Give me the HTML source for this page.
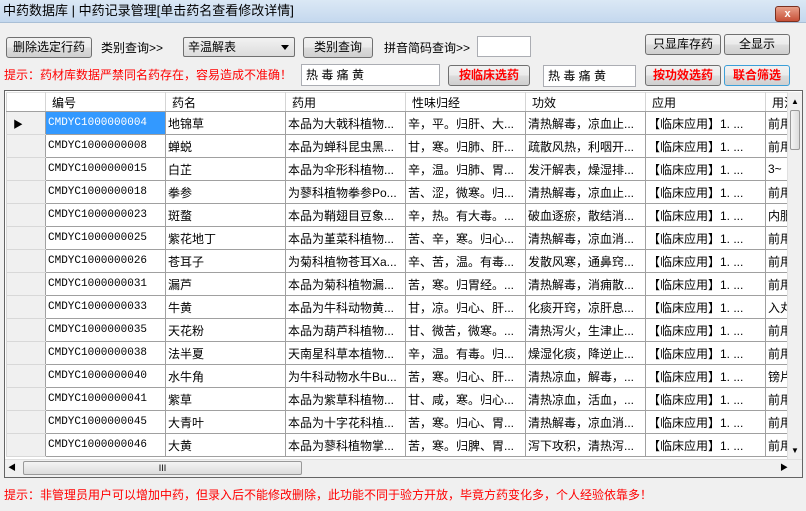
<!DOCTYPE html><html><head><meta charset="utf-8"><style>
*{box-sizing:border-box;margin:0;padding:0}
body{width:806px;height:511px;overflow:hidden;background:#f0f0f0;font-family:"Liberation Sans","Noto Sans CJK SC",sans-serif;font-size:12px;position:relative;color:#000}
.abs{position:absolute}
.title{left:0;top:0;width:806px;height:23px;background:linear-gradient(#dbe8f5,#c4d8ee);border-bottom:1px solid #a9bfd6;font-size:13px;line-height:22px;padding-left:3px}
.btn{position:absolute;height:21px;border:1px solid #707070;border-radius:3px;background:linear-gradient(#f2f2f2,#ebebeb 50%,#dddddd 51%,#cfcfcf);text-align:center;line-height:19px;font-size:12px}
.red{color:#f00;font-weight:bold}
.inp{position:absolute;background:#fff;border:1px solid #abadb3;font-size:12px;line-height:20px;padding-left:4px}
.lbl{position:absolute;font-size:12px}
table{border-collapse:collapse;table-layout:fixed;position:absolute;left:6px;top:92px}
td{border:1px solid #a0a0a0;height:23px;white-space:nowrap;overflow:hidden;font-size:12px;padding-left:2px;background:#fff}
td.rh{background:#f0f0f0;border-color:#d8d8d8 #a0a0a0 #d8d8d8 #d8d8d8}
td.id{font-family:"Liberation Mono",monospace;font-size:11px}
tr.h td{height:19px;background:#fff;font-size:12px;padding-left:6px;border-color:#e0e0e0 #d5d5d5 #a0a0a0 #d5d5d5}
</style></head><body>
<div class="abs title">中药数据库 | 中药记录管理[单击药名查看修改详情]</div>
<div class="abs" style="left:775px;top:6px;width:25px;height:16px;background:linear-gradient(#e8a08a,#c75038);border:1px solid #7a3020;border-radius:3px;color:#fff;font-size:11px;text-align:center;line-height:14px;font-weight:bold">x</div>
<div class="btn" style="left:6px;top:37px;width:86px">删除选定行药</div>
<div class="lbl" style="left:101px;top:39px">类别查询&gt;&gt;</div>
<div class="abs" style="left:183px;top:37px;width:112px;height:20px;border:1px solid #707070;border-radius:2px;background:linear-gradient(#f2f2f2,#dcdcdc);font-size:12px;line-height:18px;padding-left:4px">辛温解表<span style="position:absolute;right:5px;top:7px;border-left:4px solid transparent;border-right:4px solid transparent;border-top:5px solid #000"></span></div>
<div class="btn" style="left:303px;top:37px;width:70px">类别查询</div>
<div class="lbl" style="left:384px;top:39px">拼音简码查询&gt;&gt;</div>
<div class="inp" style="left:477px;top:36px;width:54px;height:21px"></div>
<div class="btn" style="left:645px;top:34px;width:76px">只显库存药</div>
<div class="btn" style="left:724px;top:34px;width:66px">全显示</div>
<div class="lbl" style="left:4px;top:66px;color:#f00">提示：药材库数据严禁同名药存在，容易造成不准确！</div>
<div class="inp" style="left:301px;top:64px;width:139px;height:22px">热 毒 痛 黄</div>
<div class="btn red" style="left:448px;top:65px;width:82px">按临床选药</div>
<div class="inp" style="left:543px;top:65px;width:93px;height:22px">热 毒 痛 黄</div>
<div class="btn red" style="left:645px;top:65px;width:76px">按功效选药</div>
<div class="btn red" style="left:724px;top:65px;width:66px;border-color:#3c9fd8">联合筛选</div>
<div class="abs" style="left:4px;top:90px;width:799px;height:388px;border:1px solid #646464;background:#fff"></div>
<table>
<colgroup><col style="width:39px"><col style="width:120px"><col style="width:120px"><col style="width:120px"><col style="width:120px"><col style="width:120px"><col style="width:120px"><col style="width:23px"></colgroup>
<tr class="h"><td class="rh"></td><td>编号</td><td>药名</td><td>药用</td><td>性味归经</td><td>功效</td><td>应用</td><td>用法</td></tr>
<tr><td class="rh" style="padding-left:6px;font-size:10px">▶</td><td class="id" style="background:#3399ff;color:#fff">CMDYC1000000004</td><td>地锦草</td><td>本品为大戟科植物...</td><td>辛，平。归肝、大...</td><td>清热解毒，凉血止...</td><td>【临床应用】1. ...</td><td>前用</td></tr>
<tr><td class="rh"></td><td class="id">CMDYC1000000008</td><td>蝉蜕</td><td>本品为蝉科昆虫黑...</td><td>甘，寒。归肺、肝...</td><td>疏散风热，利咽开...</td><td>【临床应用】1. ...</td><td>前用</td></tr>
<tr><td class="rh"></td><td class="id">CMDYC1000000015</td><td>白芷</td><td>本品为伞形科植物...</td><td>辛，温。归肺、胃...</td><td>发汗解表，燥湿排...</td><td>【临床应用】1. ...</td><td>3~</td></tr>
<tr><td class="rh"></td><td class="id">CMDYC1000000018</td><td>拳参</td><td>为蓼科植物拳参Po...</td><td>苦、涩，微寒。归...</td><td>清热解毒，凉血止...</td><td>【临床应用】1. ...</td><td>前用</td></tr>
<tr><td class="rh"></td><td class="id">CMDYC1000000023</td><td>斑蝥</td><td>本品为鞘翅目豆象...</td><td>辛，热。有大毒。...</td><td>破血逐瘀，散结消...</td><td>【临床应用】1. ...</td><td>内服</td></tr>
<tr><td class="rh"></td><td class="id">CMDYC1000000025</td><td>紫花地丁</td><td>本品为堇菜科植物...</td><td>苦、辛，寒。归心...</td><td>清热解毒，凉血消...</td><td>【临床应用】1. ...</td><td>前用</td></tr>
<tr><td class="rh"></td><td class="id">CMDYC1000000026</td><td>苍耳子</td><td>为菊科植物苍耳Xa...</td><td>辛、苦，温。有毒...</td><td>发散风寒，通鼻窍...</td><td>【临床应用】1. ...</td><td>前用</td></tr>
<tr><td class="rh"></td><td class="id">CMDYC1000000031</td><td>漏芦</td><td>本品为菊科植物漏...</td><td>苦，寒。归胃经。...</td><td>清热解毒，消痈散...</td><td>【临床应用】1. ...</td><td>前用</td></tr>
<tr><td class="rh"></td><td class="id">CMDYC1000000033</td><td>牛黄</td><td>本品为牛科动物黄...</td><td>甘，凉。归心、肝...</td><td>化痰开窍，凉肝息...</td><td>【临床应用】1. ...</td><td>入丸</td></tr>
<tr><td class="rh"></td><td class="id">CMDYC1000000035</td><td>天花粉</td><td>本品为葫芦科植物...</td><td>甘、微苦，微寒。...</td><td>清热泻火，生津止...</td><td>【临床应用】1. ...</td><td>前用</td></tr>
<tr><td class="rh"></td><td class="id">CMDYC1000000038</td><td>法半夏</td><td>天南星科草本植物...</td><td>辛，温。有毒。归...</td><td>燥湿化痰，降逆止...</td><td>【临床应用】1. ...</td><td>前用</td></tr>
<tr><td class="rh"></td><td class="id">CMDYC1000000040</td><td>水牛角</td><td>为牛科动物水牛Bu...</td><td>苦，寒。归心、肝...</td><td>清热凉血，解毒，...</td><td>【临床应用】1. ...</td><td>镑片</td></tr>
<tr><td class="rh"></td><td class="id">CMDYC1000000041</td><td>紫草</td><td>本品为紫草科植物...</td><td>甘、咸，寒。归心...</td><td>清热凉血，活血，...</td><td>【临床应用】1. ...</td><td>前用</td></tr>
<tr><td class="rh"></td><td class="id">CMDYC1000000045</td><td>大青叶</td><td>本品为十字花科植...</td><td>苦，寒。归心、胃...</td><td>清热解毒，凉血消...</td><td>【临床应用】1. ...</td><td>前用</td></tr>
<tr><td class="rh"></td><td class="id">CMDYC1000000046</td><td>大黄</td><td>本品为蓼科植物掌...</td><td>苦，寒。归脾、胃...</td><td>泻下攻积，清热泻...</td><td>【临床应用】1. ...</td><td>前用</td></tr>
</table>
<div class="abs" style="left:787px;top:92px;width:15px;height:367px;background:#f0f0f0;border-left:1px solid #e0e0e0"></div>
<div class="abs" style="left:791px;top:97px;font-size:8px">▲</div>
<div class="abs" style="left:790px;top:110px;width:10px;height:40px;border:1px solid #999;border-radius:2px;background:linear-gradient(90deg,#f4f4f4,#dcdcdc)"></div>
<div class="abs" style="left:791px;top:446px;font-size:8px">▼</div>
<div class="abs" style="left:5px;top:459px;width:797px;height:18px;background:#f0f0f0;border-top:1px solid #e0e0e0"></div>
<div class="abs" style="left:8px;top:462px;font-size:8px">◀</div>
<div class="abs" style="left:23px;top:461px;width:279px;height:14px;border:1px solid #999;border-radius:2px;background:linear-gradient(#f4f4f4,#dcdcdc);text-align:center;font-size:9px;line-height:12px">III</div>
<div class="abs" style="left:780px;top:462px;font-size:8px">▶</div>
<div class="abs" style="left:4px;top:486px;color:#f00;font-size:12px">提示：非管理员用户可以增加中药，但录入后不能修改删除，此功能不同于验方开放，毕竟方药变化多，个人经验依靠多！</div>
</body></html>
